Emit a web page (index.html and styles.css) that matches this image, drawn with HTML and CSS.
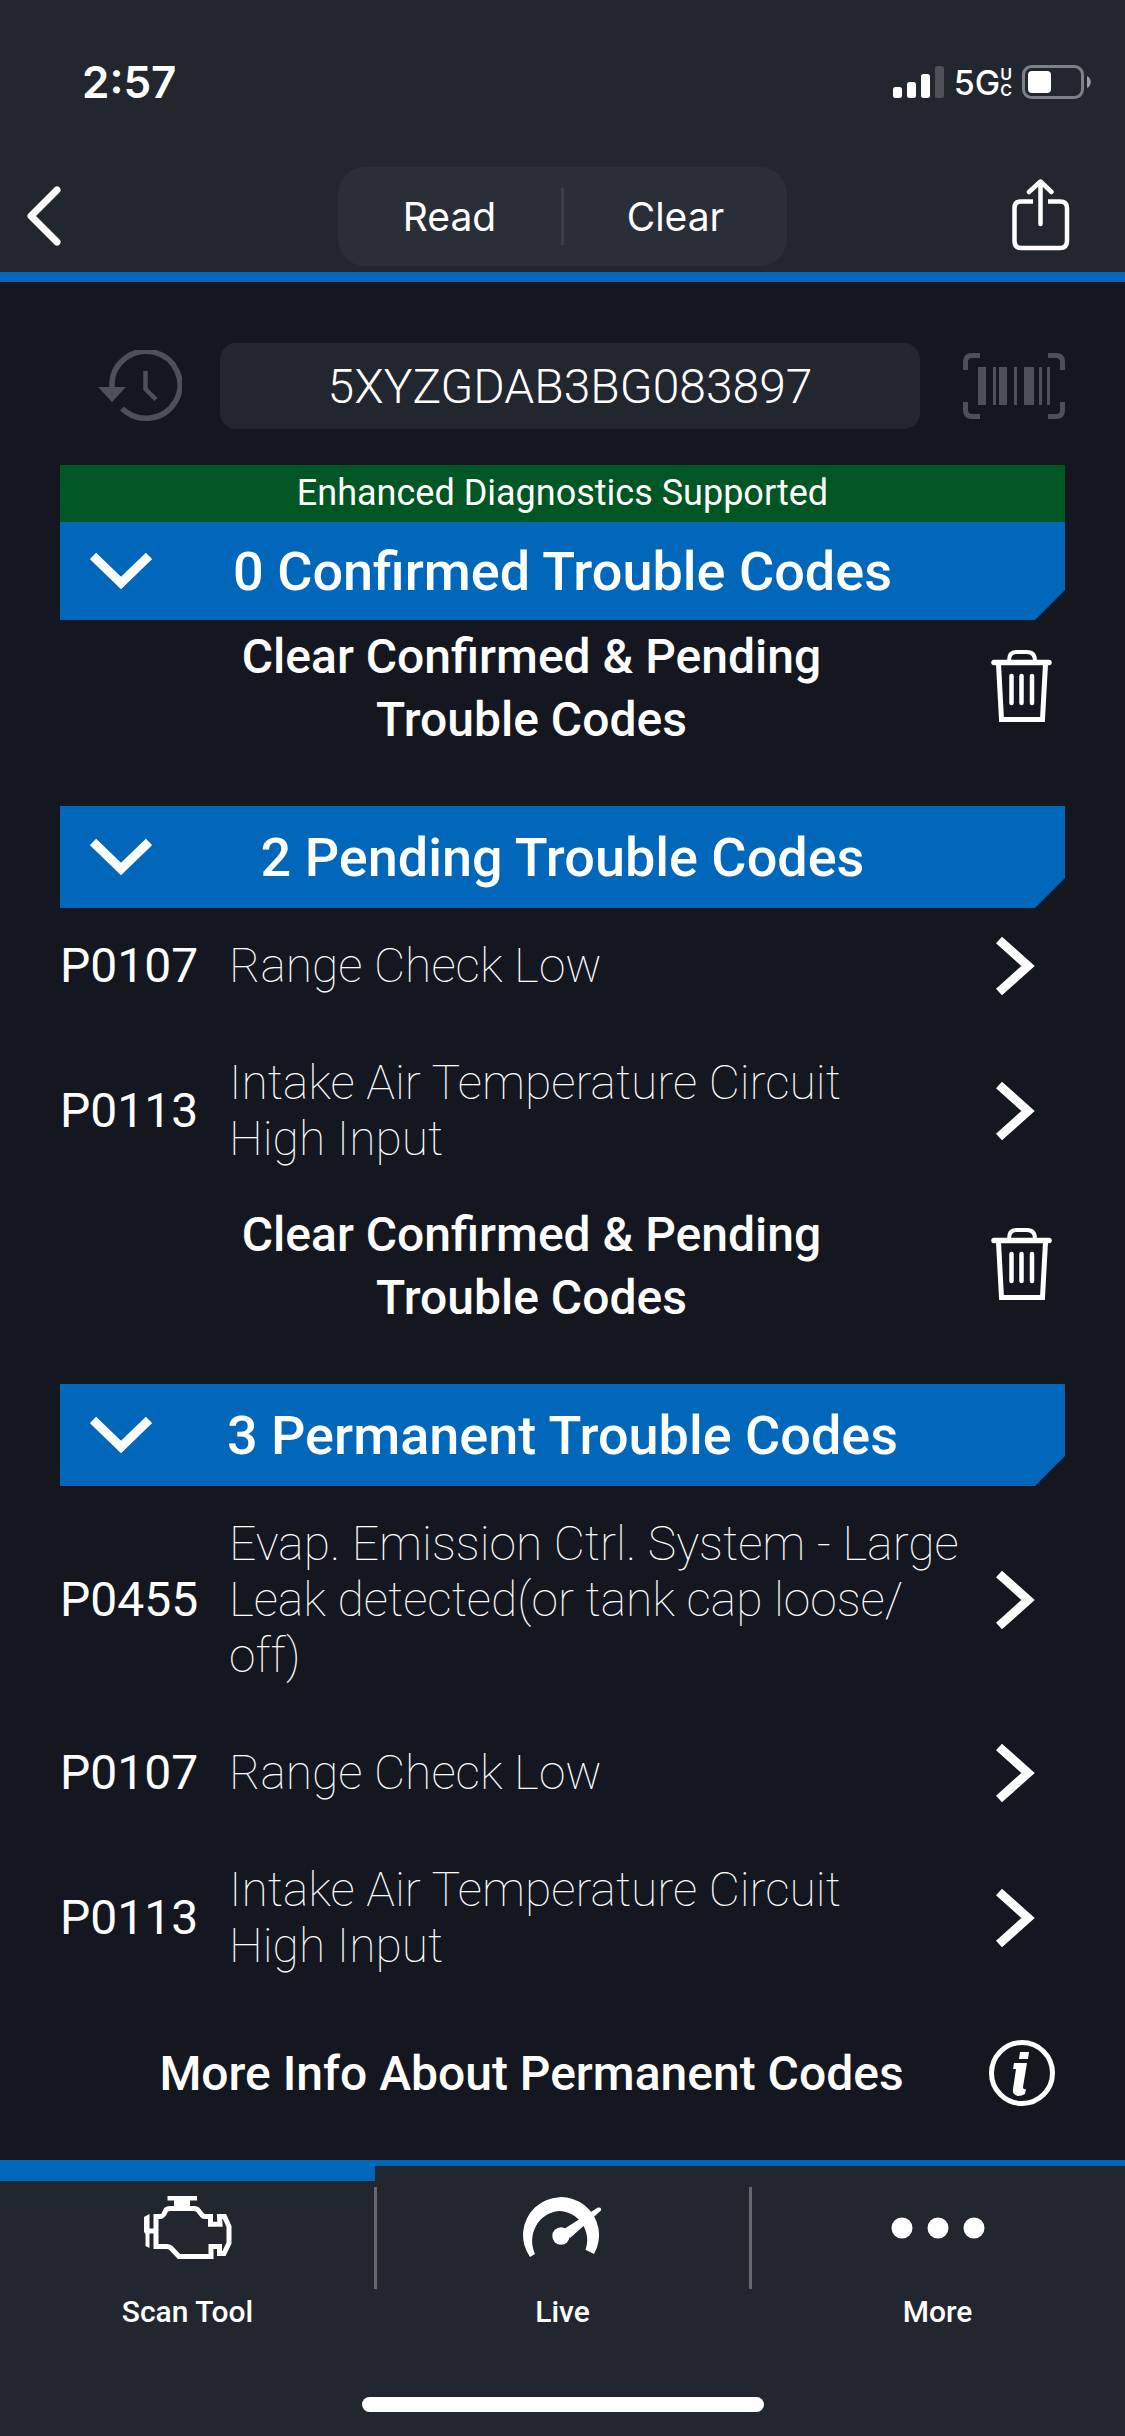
FILE: index.html
```html
<!DOCTYPE html>
<html lang="en">
  <head>
    <meta charset="UTF-8" />
    <meta name="viewport" content="width=device-width, initial-scale=1.0" />
    <title>Trouble Codes</title>
    <link rel="stylesheet" href="styles.css">
  </head>
  <body>
    <!-- shared icons -->
    <svg class="sprite" aria-hidden="true">
      <symbol id="chevron-down" viewBox="0 0 62 38">
        <path d="M3 4 L31 31 L59 4" fill="none" stroke="currentColor" stroke-width="9" />
      </symbol>
      <symbol id="chevron-right" viewBox="0 0 40 60">
        <path d="M3 4 L32 30 L3 56" fill="none" stroke="currentColor" stroke-width="9" />
      </symbol>
      <symbol id="trash" viewBox="0 0 62 76">
        <g fill="none" stroke="currentColor" stroke-linecap="round">
          <path d="M3 12.5 H58" stroke-width="5.5" />
          <path d="M18 11 C18 5 20 2 25 2 H36 C41 2 44 5 44 11" stroke-width="4" />
          <path d="M20.5 26 V53 M30.5 26 V53 M41 26 V53" stroke-width="4.5" />
          <path d="M7.5 14 L10.5 69.5 H51.5 L54.5 14" stroke-width="5" stroke-linecap="butt" />
        </g>
      </symbol>
    </svg>

    <header class="header">
      <div class="status-bar">
        <span class="time">2:57</span>
        <div class="status-icons">
          <svg width="51" height="34" viewBox="0 0 51 34">
            <g fill="#fff">
              <rect x="0" y="22" width="9" height="11" rx="2.5" />
              <rect x="14" y="17" width="9" height="16" rx="2.5" />
              <rect x="28" y="9" width="9" height="24" rx="2.5" />
              <rect x="42" y="1" width="9" height="32" rx="2.5" opacity="0.2" />
            </g>
          </svg>
          <span class="network">5G<span class="network-type"><span>U</span><span>C</span></span></span>
          <svg width="70" height="34" viewBox="0 0 70 34">
            <rect x="1.5" y="1.5" width="59" height="31" rx="8" fill="none" stroke="#7d8086" stroke-width="3" />
            <rect x="6" y="6" width="23" height="22" rx="4" fill="#fff" />
            <path d="M65 11 C70 13 70 21 65 23 Z" fill="#9b9da2" />
          </svg>
        </div>
      </div>
      <div class="toolbar">
        <button class="icon-button" type="button" aria-label="Back">
          <svg width="35" height="60" viewBox="0 0 35 60">
            <path d="M30 4 L4 30 L30 56" fill="none" stroke="#fff" stroke-width="7" stroke-linecap="round" stroke-linejoin="round" />
          </svg>
        </button>
        <div class="segmented">
          <button type="button">Read</button>
          <button type="button">Clear</button>
        </div>
        <button class="icon-button" type="button" aria-label="Share">
          <svg width="58" height="74" viewBox="0 0 58 74">
            <g fill="none" stroke="#fff" stroke-width="4.5" stroke-linecap="round" stroke-linejoin="round">
              <path d="M21 22.5 H9 Q2.500 22.5 2.500 29 V62 Q2.500 69 9 69 H48 Q55 69 55 62 V29 Q55 22.5 48 22.5 H36" stroke-linecap="butt" />
              <path d="M28.5 45 V3 M17 13 L28.5 2.500 L39.5 13" />
            </g>
          </svg>
        </button>
      </div>
    </header>

    <main class="content">
      <div class="vin-row">
        <button class="icon-button" type="button" aria-label="VIN history">
          <svg width="84" height="72" viewBox="0 0 84 72">
            <path d="M14 38 V36 A34 33.5 0 1 1 24 58.5" fill="none" stroke="#4d5058" stroke-width="5.5" />
            <path d="M0 37 H28 L14 52 Z" fill="#4d5058" />
            <path d="M47.5 21 V39 L58 49.5" fill="none" stroke="#4d5058" stroke-width="4.5" />
          </svg>
        </button>
        <input class="vin" type="text" value="5XYZGDAB3BG083897" aria-label="VIN" />
        <button class="icon-button scan" type="button" aria-label="Scan VIN">
          <svg width="102" height="66" viewBox="0 0 102 66">
            <path d="M17 2.500 H9 Q2.500 2.500 2.500 9 V17 M85 2.500 H93 Q99.500 2.500 99.500 9 V17 M17 63.5 H9 Q2.500 63.5 2.500 57 V49 M85 63.5 H93 Q99.500 63.5 99.500 57 V49" fill="none" stroke="#4d5058" stroke-width="5" />
            <path d="M15 14 h8 v38 h-8z M30 14 h3 v38 h-3z M36 14 h8 v38 h-8z M51 14 h3 v38 h-3z M61 14 h10 v38 h-10z M76 14 h3 v38 h-3z M84 14 h3 v38 h-3z" fill="#4d5058" />
          </svg>
        </button>
      </div>

      <p class="supported">Enhanced Diagnostics Supported</p>

      <section>
        <button class="section-title first" type="button">
          <svg width="62" height="38"><use href="#chevron-down" /></svg>
          <span>0 Confirmed Trouble Codes</span>
        </button>
        <button class="action" type="button">
          <span>Clear Confirmed &amp; Pending<br>Trouble Codes</span>
          <svg width="62" height="76"><use href="#trash" /></svg>
        </button>
      </section>

      <section>
        <button class="section-title" type="button">
          <svg width="62" height="38"><use href="#chevron-down" /></svg>
          <span>2 Pending Trouble Codes</span>
        </button>
        <a class="code" href="#">
          <span class="code-id">P0107</span>
          <span class="code-text">Range Check Low</span>
          <svg width="40" height="60"><use href="#chevron-right" /></svg>
        </a>
        <a class="code" href="#">
          <span class="code-id">P0113</span>
          <span class="code-text">Intake Air Temperature Circuit<br>High Input</span>
          <svg width="40" height="60"><use href="#chevron-right" /></svg>
        </a>
        <button class="action" type="button">
          <span>Clear Confirmed &amp; Pending<br>Trouble Codes</span>
          <svg width="62" height="76"><use href="#trash" /></svg>
        </button>
      </section>

      <section>
        <button class="section-title" type="button">
          <svg width="62" height="38"><use href="#chevron-down" /></svg>
          <span>3 Permanent Trouble Codes</span>
        </button>
        <a class="code" href="#">
          <span class="code-id">P0455</span>
          <span class="code-text">Evap. Emission Ctrl. System - Large Leak detected(or tank cap loose/<wbr>off)</span>
          <svg width="40" height="60"><use href="#chevron-right" /></svg>
        </a>
        <a class="code" href="#">
          <span class="code-id">P0107</span>
          <span class="code-text">Range Check Low</span>
          <svg width="40" height="60"><use href="#chevron-right" /></svg>
        </a>
        <a class="code" href="#">
          <span class="code-id">P0113</span>
          <span class="code-text">Intake Air Temperature Circuit<br>High Input</span>
          <svg width="40" height="60"><use href="#chevron-right" /></svg>
        </a>
        <button class="action last" type="button">
          <span>More Info About Permanent Codes</span>
          <svg width="66" height="66" viewBox="0 0 66 66">
            <circle cx="33" cy="33" r="30.5" fill="none" stroke="#fff" stroke-width="5" />
            <path d="M31 12 H40 L39 19 H30 Z M25 23 H38 L34 47 Q34 50 37 49 L36 54 Q33 56 29 56 Q23 55 24 49 L27 29 H24 Z" fill="#fff" />
          </svg>
        </button>
      </section>
    </main>

    <footer class="footer">
      <nav class="tabs">
        <a class="tab active" href="#">
          <svg width="88" height="64" viewBox="0 0 88 64">
            <path d="M23.5 0 H53 V4.5 H46 V11 H30 V4.5 H23.5 Z" fill="#fff" />
            <path d="M12 50.5 V20.5 H17 Q19 20 20 18 L22 14 Q23 12.5 26 12.5 H50 Q53 12.5 54 14 L58 19 Q59 20.5 61 20.5 H66.5 V28.3 H76 L75.5 20.5 H80.5 L85 30.5 V47 L80 57.5 H75.5 V50.5 H67 V60.5 H35 L27 52 Q25 50.5 23 50.5 Z M12 35 H3" fill="none" stroke="#fff" stroke-width="5" />
            <path d="M0 21 L5.5 18 V52 L1.5 50 V38 L0 36 Z" fill="#fff" />
          </svg>
          <span>Scan Tool</span>
        </a>
        <a class="tab" href="#">
          <svg width="80" height="64" viewBox="0 -4 80 64">
            <path d="M7 57 A38 38 0 1 1 71 54 L62.5 49.7 A29 29 0 0 0 36 11 A29 30 0 0 0 12 54 Z" fill="#fff" />
            <path d="M41 29 L75 7.500 Q79 7 78 10.500 L47 38 Z" fill="#fff" />
            <circle cx="38" cy="36" r="8.7" fill="#fff" />
          </svg>
          <span>Live</span>
        </a>
        <a class="tab" href="#">
          <svg width="94" height="64" viewBox="0 0 94 64">
            <g fill="#fff">
              <circle cx="11" cy="32" r="10.5" />
              <circle cx="47" cy="32" r="10.5" />
              <circle cx="83" cy="32" r="10.5" />
            </g>
          </svg>
          <span>More</span>
        </a>
      </nav>
      <div class="home-indicator"></div>
    </footer>
  </body>
</html>
```

FILE: styles.css
```css
* {
  box-sizing: border-box;
}
body {
  margin: 0;
  min-height: 100vh;
  display: flex;
  flex-direction: column;
  background: #14171f;
  color: #fff;
  font-family: Roboto, sans-serif;
}
button {
  padding: 0;
  border: 0;
  background: none;
  color: inherit;
  font: inherit;
  cursor: pointer;
}
a {
  color: inherit;
  text-decoration: none;
}
svg {
  display: block;
  flex-shrink: 0;
}
.sprite {
  position: absolute;
  width: 0;
  height: 0;
}

/* header */
.header {
  background: #22262f;
  border-bottom: 10px solid #0067bb;
  font-family: Inter, sans-serif;
}
.status-bar {
  display: flex;
  align-items: center;
  justify-content: space-between;
  height: 164px;
  padding: 0 33px 0 82px;
}
.time {
  font-size: 44px;
  font-weight: 600;
}
.status-icons {
  display: flex;
  align-items: center;
  gap: 10px;
}
.network {
  display: flex;
  align-items: center;
  font-size: 34px;
  font-weight: 500;
}
.network-type {
  display: flex;
  flex-direction: column;
  font-size: 16px;
  line-height: 16px;
  font-weight: 600;
}
.toolbar {
  display: grid;
  grid-template-columns: 1fr 449px 1fr;
  align-items: center;
  height: 108px;
  padding: 0 27px 4px;
}
.icon-button {
  justify-self: center;
}
.toolbar .icon-button:first-child {
  justify-self: start;
}
.toolbar .icon-button:last-child {
  justify-self: end;
  margin-right: 28px;
}
.segmented {
  display: flex;
  align-items: center;
  height: 99px;
  border-radius: 27px;
  background: #2a2e38;
}
.segmented button {
  flex: 1;
  height: 57px;
  font-size: 39px;
  line-height: 57px;
}
.segmented button + button {
  border-left: 3px solid #3a3e47;
}

/* content */
.content {
  padding: 61px 60px 19px;
}
.vin-row {
  display: grid;
  grid-template-columns: 160px 1fr 145px;
  align-items: center;
  margin-bottom: 36px;
}
.vin {
  width: 100%;
  height: 86px;
  padding: 0;
  border: 0;
  border-radius: 16px;
  background: #22262f;
  color: #fff;
  font-family: inherit;
  font-size: 48px;
  font-weight: 300;
  text-align: center;
}
.scan {
  justify-self: end;
}
.supported {
  margin: 0;
  background: #005723;
  font-size: 36px;
  line-height: 57px;
  text-align: center;
}
.section-title {
  display: grid;
  grid-template-columns: 62px 1fr 62px;
  align-items: center;
  width: 100%;
  height: 102px;
  padding: 0 30px;
  background: #0067bb;
  clip-path: polygon(0 0, 100% 0, 100% calc(100% - 30px), calc(100% - 30px) 100%, 0 100%);
  font-size: 54px;
  font-weight: 500;
}
.section-title.first {
  height: 98px;
}
.action {
  display: grid;
  grid-template-columns: 1fr 86px;
  align-items: center;
  justify-items: center;
  width: 100%;
  height: 136px;
  margin-bottom: 50px;
  padding-left: 24px;
  font-size: 48px;
  font-weight: 500;
  line-height: 63px;
}
.action.last {
  margin-bottom: 0;
}
.code {
  display: grid;
  grid-template-columns: 169px 1fr 98px;
  align-items: center;
  margin-bottom: 1px;
  padding: 30px 0;
  font-size: 48px;
  line-height: 56px;
}
.code svg {
  justify-self: center;
  margin: -2px 0;
}
.code-text {
  font-weight: 100;
}

/* tab bar */
.footer {
  margin-top: auto;
  padding-bottom: 24px;
  border-top: 6px solid #0067bb;
  background: #22262f;
}
.tabs {
  display: flex;
  margin-bottom: 67px;
}
.tab {
  position: relative;
  flex: 1;
  display: flex;
  flex-direction: column;
  align-items: center;
  gap: 34px;
  padding-top: 15px;
  border-top: 15px solid transparent;
  font-size: 30px;
  font-weight: 500;
  line-height: 36px;
}
.tab.active {
  border-top-color: #0067bb;
}
.tab + .tab::before {
  content: "";
  position: absolute;
  top: 6px;
  left: -1px;
  width: 3px;
  height: 102px;
  background: #65686d;
}
.home-indicator {
  width: 402px;
  height: 15px;
  margin: 0 auto;
  border-radius: 8px;
  background: #fff;
}
```
